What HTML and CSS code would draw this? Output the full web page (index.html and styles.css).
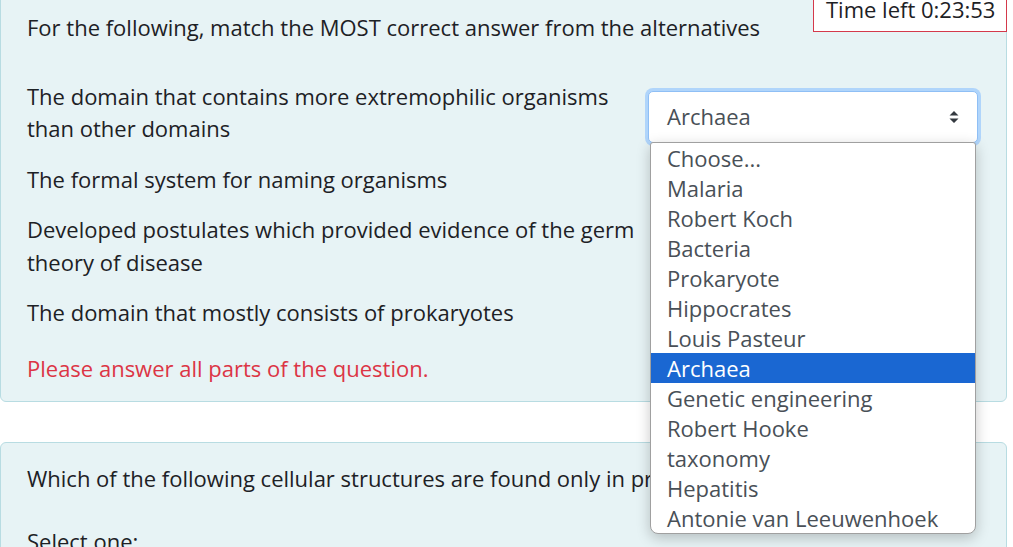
FILE: index.html
```html
<!DOCTYPE html>
<html lang="en">
<head>
<meta charset="utf-8">
<title>Quiz</title>
<link rel="stylesheet" href="styles.css">
</head>
<body>
<div class="page">
  <div class="timer">Time left 0:23:53</div>

  <div class="que">
    <p class="qtext">For the following, match the MOST correct answer from the alternatives</p>
    <div class="match">
      <div class="stem">The domain that contains more extremophilic organisms than other domains</div>
      <div class="control">
        <div class="selectbox">
          <span class="sel-value">Archaea</span>
          <svg class="caret" width="10" height="14" viewBox="0 0 10 14"><path d="M5 1 L9.5 5.5 H0.5 Z M5 13 L9.5 8.5 H0.5 Z" fill="#343a40"/></svg>
        </div>
      </div>
      <div class="stem">The formal system for naming organisms</div>
      <div class="control"></div>
      <div class="stem">Developed postulates which provided evidence of the germ theory of disease</div>
      <div class="control"></div>
      <div class="stem">The domain that mostly consists of prokaryotes</div>
      <div class="control"></div>
    </div>
    <p class="error">Please answer all parts of the question.</p>
  </div>

  <div class="que que2">
    <p class="qtext">Which of the following cellular structures are found only in prokaryotes?</p>
    <p class="prompt">Select one:</p>
  </div>

  <ul class="popup">
    <li>Choose...</li>
    <li>Malaria</li>
    <li>Robert Koch</li>
    <li>Bacteria</li>
    <li>Prokaryote</li>
    <li>Hippocrates</li>
    <li>Louis Pasteur</li>
    <li class="active">Archaea</li>
    <li>Genetic engineering</li>
    <li>Robert Hooke</li>
    <li>taxonomy</li>
    <li>Hepatitis</li>
    <li>Antonie van Leeuwenhoek</li>
  </ul>
</div>
</body>
</html>
```

FILE: styles.css
```css
html, body {
  margin: 0;
  padding: 0;
  background: #ffffff;
  overflow: hidden;
}

.page {
  position: relative;
  width: 1013px;
  height: 547px;
  overflow: hidden;
  font-family: "Open Sans", "Liberation Sans", sans-serif;
  font-size: 22px;
  line-height: 32.5px;
  color: #1d2125;
}

p { margin: 0; }

.que {
  background: #e7f3f5;
  border: 1px solid #b8dce2;
  border-radius: 6px;
  margin: -12px 6px 0 0;
  padding: 22px 20px 17px 26px;
}

.qtext { margin: 0; }

.match {
  display: grid;
  grid-template-columns: 615px 330px;
  column-gap: 6px;
  row-gap: 18px;
  margin-top: 36px;
}

.stem { max-width: 615px; }

.control { min-height: 10px; }

.selectbox {
  position: relative;
  margin-top: 11px;
  height: 52px;
  box-sizing: border-box;
  background: #ffffff;
  border: 1px solid #8fbff5;
  border-radius: 5px;
  box-shadow: 0 0 0 3px #b0d5fb;
  display: flex;
  align-items: center;
  padding-left: 18px;
  color: #495057;
}

.caret {
  position: absolute;
  right: 18px;
  top: 18px;
}

.error {
  color: #dc3545;
  margin-top: 23px;
}

.que2 {
  margin-top: 40px;
  padding-top: 19px;
  padding-bottom: 40px;
}

.prompt { margin-top: 30px; }

.timer {
  position: absolute;
  top: -12px;
  right: 6px;
  z-index: 2;
  background: #ffffff;
  border: 1px solid #d4394b;
  padding: 6px 12px 0 12px;
  height: 44px;
  box-sizing: border-box;
  width: 194px;
  font-size: 22px;
  line-height: 28px;
  color: #1d2125;
  white-space: nowrap;
}

.popup {
  position: absolute;
  left: 650px;
  top: 142px;
  width: 326px;
  box-sizing: border-box;
  margin: 0;
  padding: 0;
  list-style: none;
  background: #ffffff;
  border: 1px solid #a0a0a0;
  border-radius: 3px 3px 8px 8px;
  box-shadow: 0 4px 14px rgba(0, 0, 0, 0.22);
  z-index: 3;
  overflow: hidden;
}

.popup li {
  height: 30px;
  line-height: 30px;
  padding-left: 16px;
  color: #495057;
  white-space: nowrap;
}

.popup li.active {
  background: #1a67d2;
  color: #ffffff;
}
```
